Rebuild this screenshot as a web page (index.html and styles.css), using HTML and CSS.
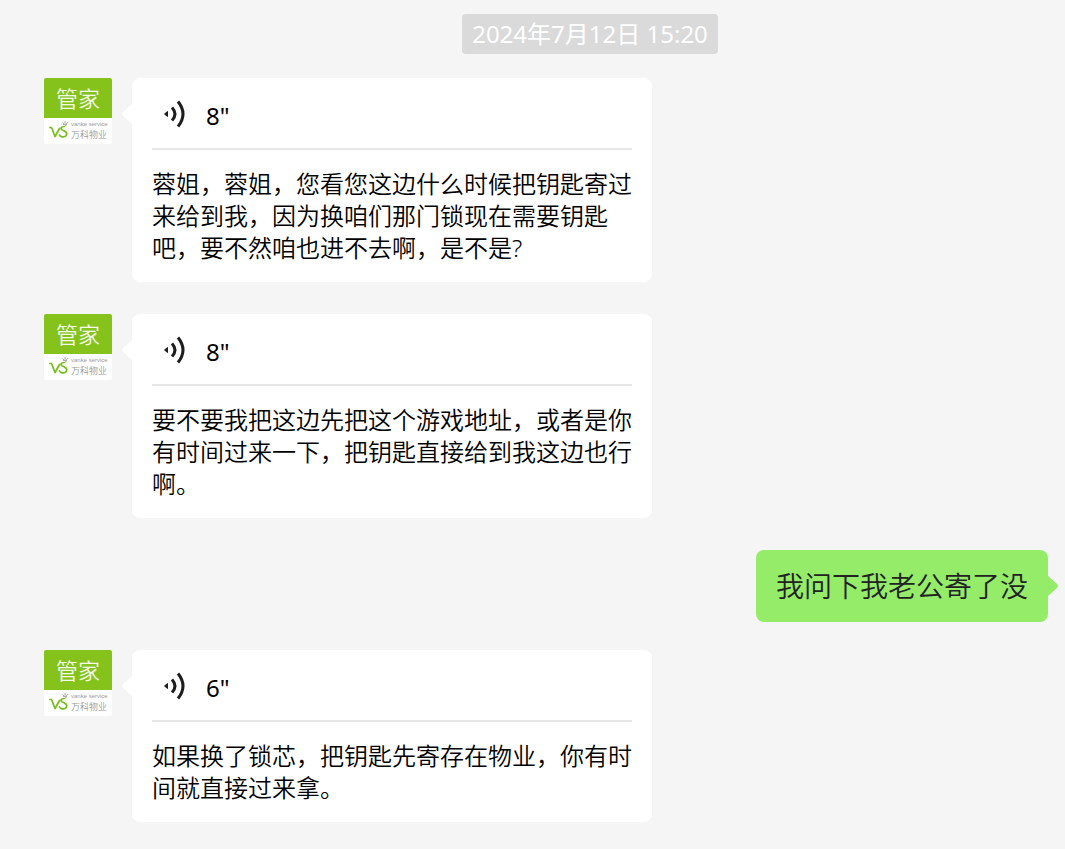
FILE: index.html
```html
<!DOCTYPE html>
<html lang="zh-CN">
<head>
<meta charset="utf-8">
<title>聊天记录</title>
<link rel="stylesheet" href="styles.css">
</head>
<body>
<svg class="defs" aria-hidden="true">
  <symbol id="vs-logo" viewBox="0 0 20 22">
    <path d="M1 7.500 Q2.500 7 3.200 9 L6 16.500 L10.500 8.500" fill="none" stroke="#78c11c" stroke-width="1.800" stroke-linecap="round" stroke-linejoin="round"/>
    <path d="M15.500 6.500 Q12 6.500 12 8.500 Q12.500 10 15 10.800 Q18.500 12.500 17.500 15 Q16 17.500 13 16.800 Q11.500 16.500 10.500 15" fill="none" stroke="#78c11c" stroke-width="1.700" stroke-linecap="round" stroke-linejoin="round"/>
    <path d="M13.500 2.500 l1.500 1.500 M16 1 v3 M19 2 l-2 2.500 M14 4.500 h4 M16 6 l2 -1.500" fill="none" stroke="#a5a5a5" stroke-width="0.900"/>
  </symbol>
  <symbol id="voice" viewBox="0 0 24 30">
    <path d="M2.500 15 L5.500 12.500 V17.500 Z" fill="#1d1d1d" stroke="#1d1d1d" stroke-linejoin="round"/>
    <path d="M10 8.500 Q16 15 10 21.500 M16 2.500 Q26 15 16 27.500" fill="none" stroke="#1d1d1d" stroke-width="3"/>
  </symbol>
</svg>
<main class="chat">
  <time class="stamp" datetime="2024-07-12T15:20">2024年7月12日 15:20</time>

  <article class="message">
    <div class="avatar">
      <div class="avatar-role">管家</div>
      <div class="avatar-brand"><svg class="avatar-logo"><use href="#vs-logo"/></svg><div class="brand-text"><span class="brand-en">vanke service</span><span class="brand-cn">万科物业</span></div></div>
    </div>
    <div class="bubble voice-bubble">
      <button class="voice" type="button"><svg class="voice-icon"><use href="#voice"/></svg><span class="voice-length">8"</span></button>
      <p class="transcript">蓉姐，蓉姐，您看您这边什么时候把钥匙寄过来给到我，因为换咱们那门锁现在需要钥匙吧，要不然咱也进不去啊，是不是?</p>
    </div>
  </article>

  <article class="message">
    <div class="avatar">
      <div class="avatar-role">管家</div>
      <div class="avatar-brand"><svg class="avatar-logo"><use href="#vs-logo"/></svg><div class="brand-text"><span class="brand-en">vanke service</span><span class="brand-cn">万科物业</span></div></div>
    </div>
    <div class="bubble voice-bubble">
      <button class="voice" type="button"><svg class="voice-icon"><use href="#voice"/></svg><span class="voice-length">8"</span></button>
      <p class="transcript">要不要我把这边先把这个游戏地址，或者是你有时间过来一下，把钥匙直接给到我这边也行啊。</p>
    </div>
  </article>

  <article class="message message-own">
    <p class="bubble own-bubble">我问下我老公寄了没</p>
  </article>

  <article class="message">
    <div class="avatar">
      <div class="avatar-role">管家</div>
      <div class="avatar-brand"><svg class="avatar-logo"><use href="#vs-logo"/></svg><div class="brand-text"><span class="brand-en">vanke service</span><span class="brand-cn">万科物业</span></div></div>
    </div>
    <div class="bubble voice-bubble">
      <button class="voice" type="button"><svg class="voice-icon"><use href="#voice"/></svg><span class="voice-length">6"</span></button>
      <p class="transcript">如果换了锁芯，把钥匙先寄存在物业，你有时间就直接过来拿。</p>
    </div>
  </article>
</main>
</body>
</html>
```
FILE: styles.css
```css
* {
  box-sizing: border-box;
}

body {
  margin: 0;
  background: #f5f5f5;
  color: #000;
  font-family: "Noto Sans", "Noto Sans CJK SC", sans-serif;
  font-size: 24px;
  font-weight: 350;
  line-height: 32px;
}

p {
  margin: 0;
}

.defs {
  position: absolute;
  width: 0;
  height: 0;
}

.chat {
  display: flex;
  flex-direction: column;
  padding: 14px 17px 24px 44px;
}

.stamp {
  align-self: center;
  margin: 0 0 24px 88px;
  padding: 4px 10px;
  border-radius: 4px;
  background: #dadada;
  color: #fff;
  font-weight: 400;
}

.message {
  display: flex;
  align-items: flex-start;
  gap: 20px;
  margin-bottom: 32px;
}

.message-own {
  justify-content: flex-end;
  margin-bottom: 28px;
}

.avatar {
  flex: none;
  width: 68px;
  overflow: hidden;
  border-radius: 2px;
  background: #fff;
}

.avatar-role {
  background: #85c21c;
  color: #f4fbe8;
  font-size: 22px;
  line-height: 40px;
  text-align: center;
}

.avatar-brand {
  display: flex;
  align-items: center;
  gap: 2px;
  height: 26px;
  padding-left: 5px;
}

.avatar-logo {
  flex: none;
  width: 20px;
  height: 22px;
}

.brand-text {
  display: flex;
  flex-direction: column;
  color: #999;
  white-space: nowrap;
}

.brand-en {
  font-family: "Liberation Sans", sans-serif;
  font-size: 6px;
  line-height: 7px;
}

.brand-cn {
  font-family: "Noto Sans CJK SC", sans-serif;
  font-size: 9px;
  line-height: 13px;
}

.bubble {
  position: relative;
  border-radius: 8px;
  background: #fff;
}

.bubble::before {
  content: "";
  position: absolute;
  top: 26px;
  left: -10px;
  width: 10px;
  height: 20px;
  background: inherit;
  clip-path: polygon(100% 0, 10% 40%, 0 50%, 10% 60%, 100% 100%);
}

.voice-bubble {
  width: 520px;
  padding: 0 20px 18px;
}

.voice {
  display: flex;
  align-items: center;
  gap: 20px;
  width: 100%;
  height: 72px;
  padding: 2px 10px 0;
  border: 0;
  border-bottom: 2px solid #e7e7e7;
  background: none;
  color: inherit;
  font: inherit;
  text-align: left;
}

.voice-icon {
  width: 24px;
  height: 30px;
}

.voice-length {
  padding-top: 4px;
  font-weight: 400;
}

.transcript {
  padding-top: 18px;
}

.own-bubble {
  padding: 20px;
  background: #95ec69;
  color: #222;
  font-size: 28px;
}

.own-bubble::before {
  left: 100%;
  clip-path: polygon(0 0, 90% 40%, 100% 50%, 90% 60%, 0 100%);
}
```
